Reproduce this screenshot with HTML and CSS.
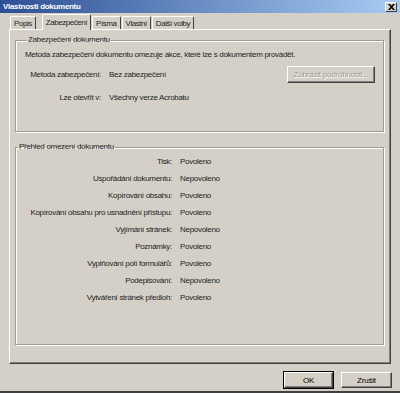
FILE: index.html
```html
<!DOCTYPE html>
<html lang="cs">
<head>
    <meta charset="UTF-8">
    <title>Vlastnosti dokumentu</title>
    <link rel="stylesheet" href="styles.css">
</head>
<body>
    <div class="window">
        <div class="titlebar">
            <span class="title">Vlastnosti dokumentu</span>
            <span class="close">
                <svg width="7" height="6" viewBox="0 0 7 6"><path d="M0 0h2l1.5 1.8L5 0h2L4.5 3 7 6H5L3.5 4.2 2 6H0l2.5-3z" fill="#000"/></svg>
            </span>
        </div>
        <div class="tabs">
            <div class="tab">Popis</div>
            <div class="tab active">Zabezpečení</div>
            <div class="tab">Písma</div>
            <div class="tab">Vlastní</div>
            <div class="tab">Další volby</div>
        </div>
        <div class="panel">
            <fieldset class="group group-top">
                <legend>Zabezpečení dokumentu</legend>
                <p class="intro">Metoda zabezpečení dokumentu omezuje akce, které lze s dokumentem provádět.</p>
                <div class="row method">
                    <span class="label short">Metoda zabezpečení:</span>
                    <span class="value">Bez zabezpečení</span>
                    <button class="btn details" disabled>Zobrazit podrobnosti...</button>
                </div>
                <div class="row">
                    <span class="label short">Lze otevřít v:</span>
                    <span class="value">Všechny verze Acrobatu</span>
                </div>
            </fieldset>
            <fieldset class="group group-list">
                <legend>Přehled omezení dokumentu</legend>
                <div class="list">
                    <div class="row"><span class="label">Tisk:</span><span class="value">Povoleno</span></div>
                    <div class="row"><span class="label">Uspořádání dokumentu:</span><span class="value">Nepovoleno</span></div>
                    <div class="row"><span class="label">Kopírování obsahu:</span><span class="value">Povoleno</span></div>
                    <div class="row"><span class="label">Kopírování obsahu pro usnadnění přístupu:</span><span class="value">Povoleno</span></div>
                    <div class="row"><span class="label">Vyjímání stránek:</span><span class="value">Nepovoleno</span></div>
                    <div class="row"><span class="label">Poznámky:</span><span class="value">Povoleno</span></div>
                    <div class="row"><span class="label">Vyplňování polí formulářů:</span><span class="value">Povoleno</span></div>
                    <div class="row"><span class="label">Podepisování:</span><span class="value">Nepovoleno</span></div>
                    <div class="row"><span class="label">Vytváření stránek předloh:</span><span class="value">Povoleno</span></div>
                </div>
            </fieldset>
        </div>
        <div class="buttons">
            <button class="btn ok">OK</button>
            <button class="btn">Zrušit</button>
        </div>
    </div>
</body>
</html>
```

FILE: styles.css
```css
body {
    margin: 0;
    font-family: "Liberation Sans", Arial, sans-serif;
    font-size: 8px;
    line-height: 12px;
    letter-spacing: -0.3px;
    color: #1e1e1e;
}
.window {
    width: 400px;
    height: 393px;
    box-sizing: border-box;
    background: #d4d0c8;
    border-bottom: 2px solid #404040;
    display: flex;
    flex-direction: column;
    white-space: nowrap;
}
.titlebar {
    height: 13px;
    background: linear-gradient(to right, #2c4f96, #a8ccf2);
    display: flex;
    align-items: center;
    justify-content: space-between;
    padding: 0 3px 0 3px;
}
.title {
    color: #fff;
    font-weight: bold;
}
.close {
    width: 10px;
    height: 8px;
    background: #d4d0c8;
    border: 1px solid;
    border-color: #fff #404040 #404040 #fff;
    display: flex;
    align-items: center;
    justify-content: center;
}
.tabs {
    display: flex;
    align-items: flex-end;
    height: 16px;
    padding: 0 0 0 10px;
    letter-spacing: -0.45px;
}
.tab {
    height: 12px;
    line-height: 13px;
    padding: 0 3px;
    border: 1px solid;
    border-color: #fff #404040 transparent #fff;
    border-bottom: none;
    border-radius: 2px 2px 0 0;
    margin-right: 1px;
    position: relative;
}
.tab.active {
    height: 15px;
    line-height: 15px;
    margin: 0 1px 0 5px;
    padding: 0 3px;
    background: #d4d0c8;
    z-index: 1;
    margin-bottom: -1px;
}
.panel {
    margin: 0 9px 0 9px;
    height: 329px;
    border: 1px solid;
    border-color: #fff #404040 #404040 #fff;
    box-shadow: inset -1px -1px 0 #808080;
    padding: 4px 6px 0 5px;
    display: flex;
    flex-direction: column;
    gap: 9px;
}
.group {
    margin: 0;
    padding: 0;
    border: 1px solid #a09c94;
    box-shadow: 1px 1px 0 #fff, inset 1px 1px 0 #fff;
}
.group legend {
    padding: 0 1px;
    margin-left: 2px;
}
.group-top {
    height: 98px;
    box-sizing: border-box;
    padding: 3px 0 0 9px;
}
.intro {
    margin: 0 0 2px 0;
}
.row {
    display: flex;
    align-items: center;
    height: 17px;
}
.group-top .row {
    height: 23px;
}
.label {
    width: 156px;
    text-align: right;
    flex: none;
}
.label.short {
    width: 76px;
}
.value {
    margin-left: 8px;
}
.method .value {
    flex: 1;
}
.btn {
    font-family: inherit;
    font-size: 8px;
    letter-spacing: -0.2px;
    color: #000;
    background: #d4d0c8;
    height: 17px;
    border: 1px solid;
    border-color: #fff #404040 #404040 #fff;
    box-shadow: inset -1px -1px 0 #808080;
    padding: 0;
}
.btn.details {
    width: 88px;
    margin-right: 8px;
    color: #a09c94;
    text-shadow: 1px 1px 0 #fff;
}
.group-list {
    height: 204px;
    box-sizing: border-box;
    padding: 0;
}
.buttons {
    display: flex;
    justify-content: flex-end;
    gap: 8px;
    padding: 8px 8px 0 0;
}
.buttons .btn {
    width: 51px;
    height: 16px;
}
.buttons .ok {
    width: 49px;
    outline: 1px solid #000;
    outline-offset: 0;
}
```
